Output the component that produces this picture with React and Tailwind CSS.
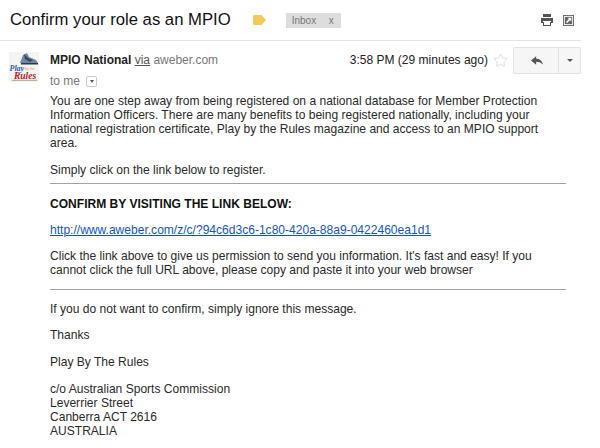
import React from 'react';
import { Star } from 'lucide-react';

const Avatar = () => (
  <svg width="30" height="30" viewBox="0 0 30 30" className="shrink-0">
    <rect width="30" height="30" fill="#f4f5f3" />
    <path d="M11 11 L14 3 L18 1 L20 5 L27 8 L29 11 L17 12 Z" fill="#6f87a1" />
    <path d="M15 2 L19 6 L24 8 L21 10 L16 7 Z" fill="#34495f" />
    <rect x="12" y="11" width="17" height="1.5" fill="#2b3948" />
    <text x="0.5" y="19" fontFamily="Liberation Serif" fontStyle="italic" fontWeight="bold" fontSize="8" fill="#2f5fb5">Play</text>
    <text x="16" y="18" fontFamily="Liberation Sans" fontSize="3.5" fill="#d9a24a">by the</text>
    <text x="5" y="26.5" fontFamily="Liberation Serif" fontStyle="italic" fontWeight="bold" fontSize="9.5" fill="#c4161c">Rules</text>
    <rect x="3" y="27.8" width="25" height="1" fill="#98ab82" />
  </svg>
);

const Printer = () => (
  <svg width="14" height="14" viewBox="0 0 14 14" fill="#555">
    <rect x="3" y="1" width="8" height="3" />
    <path d="M1 5 H13 V10 H11 V8 H3 V10 H1 Z" />
    <rect x="3" y="9" width="8" height="4" />
    <rect x="4" y="9" width="6" height="3" fill="#fff" />
  </svg>
);

const NewWindow = () => (
  <svg width="11" height="11" viewBox="0 0 12 12">
    <rect x="0.5" y="0.5" width="11" height="11" fill="#fff" stroke="#666" />
    <rect x="2" y="2" width="8" height="8" fill="#666" />
    <path d="M5 3 H9 V7 L7.6 5.6 L4.5 8.7 L3.3 7.5 L6.4 4.4 Z" fill="#fff" />
  </svg>
);

const Reply = () => (
  <svg width="12" height="10" viewBox="0 0 14 11" fill="#555">
    <path d="M6 0 V3 C10 3 13 5 14 10 C12 7.5 10 6.5 6 6.5 V10 L0 5 Z" />
  </svg>
);

const Rule = () => <div className="h-px bg-[#a3a3a3] w-[516px]" />;

export default function App() {
  return (
    <div className="w-[600px] h-[448px] overflow-hidden bg-white font-['Liberation_Sans',Arial,sans-serif] text-[#222]">
      <div className="w-[581px]">
        <div className="h-[41px] pl-[10px] flex items-center border-b border-[#e3e3e3]">
          <h1 className="text-[16.7px] leading-none text-[#111]">Confirm your role as an MPIO</h1>
          <svg width="13" height="10" viewBox="0 0 13 10" className="ml-[22px]">
            <path d="M1 0 H8.5 L13 5 L8.5 10 H1 Q0 10 0 9 V1 Q0 0 1 0 Z" fill="#f7c95c" />
          </svg>
          <div className="ml-[20px] w-[55px] h-[15px] bg-[#dddddd] flex items-center justify-between pl-[6px] pr-[7px] text-[10px] text-[#777]">
            <span>Inbox</span>
            <span>x</span>
          </div>
          <div className="ml-auto mr-[7px] flex items-center gap-[9px]">
            <Printer />
            <NewWindow />
          </div>
        </div>
        <div className="pl-[10px] pt-[6px] flex">
          <div className="pt-[5px] w-[40px] shrink-0 -ml-px">
            <Avatar />
          </div>
          <div className="flex-1 pl-px">
            <div className="flex justify-between h-[47px]">
              <div className="pt-[6px]">
                <div className="text-[12px] leading-[15px]">
                  <span className="font-bold text-[#222]">MPIO National</span>{' '}
                  <span className="text-[#555] underline">via</span>{' '}
                  <span className="text-[#777]">aweber.com</span>
                </div>
                <div className="mt-[6px] flex items-center gap-[6px] text-[12px] leading-[15px] text-[#777]">
                  to me
                  <span className="w-[11px] h-[11px] border border-[#ccc] rounded-[2px] flex items-center justify-center">
                    <span className="border-x-[2.5px] border-x-transparent border-t-[3px] border-t-[#555]" />
                  </span>
                </div>
              </div>
              <div className="flex items-start">
                <div className="pt-[6px] text-[12.02px] leading-[15px] text-[#222] mr-[5px]">3:58 PM (29 minutes ago)</div>
                <Star size={15} strokeWidth={1} className="mt-[6px] mr-[5px] text-[#ccc]" />
                <div className="flex w-[68px] h-[27px] border border-[#e2e2e2] rounded-[2px] bg-[#f6f6f6]">
                  <div className="w-[45px] pl-[2px] flex items-center justify-center border-r border-[#e2e2e2]">
                    <Reply />
                  </div>
                  <div className="flex-1 flex items-center justify-center">
                    <span className="border-x-[3px] border-x-transparent border-t-[3px] border-t-[#555]" />
                  </div>
                </div>
              </div>
            </div>
            <div className="text-[12.05px] leading-[14px] text-[#2a2a2a]">
              <p>
                You are one step away from being registered on a national database for Member Protection<br />
                Information Officers. There are many benefits to being registered nationally, including your<br />
                national registration certificate, Play by the Rules magazine and access to an MPIO support<br />
                area.
              </p>
              <p className="mt-[13px]">Simply click on the link below to register.</p>
              <div className="mt-[6px]"><Rule /></div>
              <p className="mt-[13px] font-bold text-[#111]">CONFIRM BY VISITING THE LINK BELOW:</p>
              <p className="mt-[12px]">
                <a href="#" className="text-[#1155cc] underline">http://www.aweber.com/z/c/?94c6d3c6-1c80-420a-88a9-0422460ea1d1</a>
              </p>
              <p className="mt-[12px]">
                Click the link above to give us permission to send you information. It's fast and easy! If you<br />
                cannot click the full URL above, please copy and paste it into your web browser
              </p>
              <div className="mt-[12px]"><Rule /></div>
              <p className="mt-[12px]">If you do not want to confirm, simply ignore this message.</p>
              <p className="mt-[12px]">Thanks</p>
              <p className="mt-[13px]">Play By The Rules</p>
              <p className="mt-[13px]">
                c/o Australian Sports Commission<br />
                Leverrier Street<br />
                Canberra ACT 2616<br />
                AUSTRALIA
              </p>
            </div>
          </div>
        </div>
      </div>
    </div>
  );
}
